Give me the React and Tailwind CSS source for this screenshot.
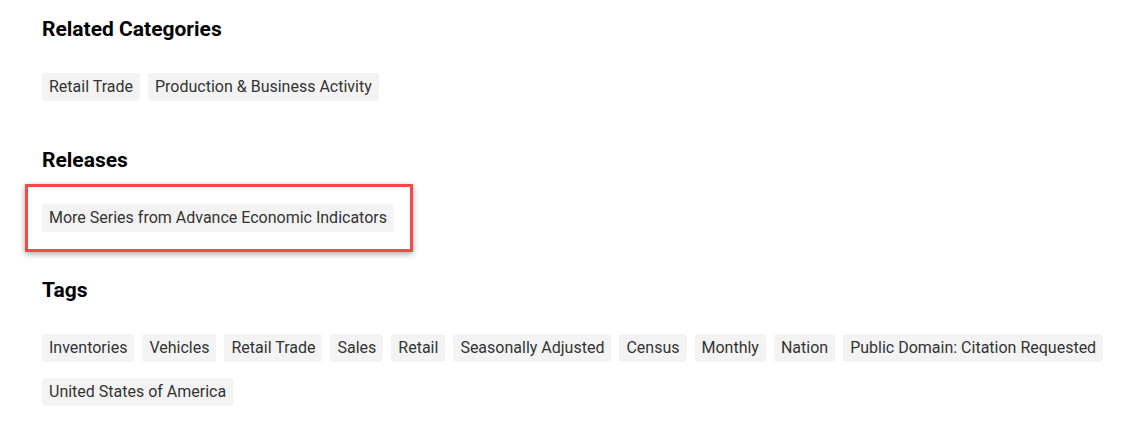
import React from "react";

const Chip = ({ children }) => (
  <span className="inline-flex items-center h-[28px] px-[7px] rounded-[3px] bg-[#f3f3f3] text-[#333333] text-[16px] leading-[28px]">
    {children}
  </span>
);

const Section = ({ title, children, className = "", gap = "mt-[30px]" }) => (
  <section className={className}>
    <h2 className="text-[21px] leading-[28px] font-bold text-black">{title}</h2>
    <div className={`${gap} flex flex-wrap gap-x-[8px] gap-y-[16px]`}>{children}</div>
  </section>
);

export default function App() {
  const tags = [
    "Inventories",
    "Vehicles",
    "Retail Trade",
    "Sales",
    "Retail",
    "Seasonally Adjusted",
    "Census",
    "Monthly",
    "Nation",
    "Public Domain: Citation Requested",
    "United States of America",
  ];
  return (
    <div className="w-[1130px] h-[432px] bg-white pl-[42px] pr-[20px] pt-[15px]" style={{ fontFamily: "Roboto, 'Liberation Sans', sans-serif" }}>
      <Section title="Related Categories">
        <Chip>Retail Trade</Chip>
        <Chip>Production &amp; Business Activity</Chip>
      </Section>
      <Section title="Releases" className="mt-[45px]">
        <div className="relative">
          <Chip>More Series from Advance Economic Indicators</Chip>
          <div className="absolute left-[-17px] top-[-20px] w-[388px] h-[68px] border-[3px] border-[#f04a4a] shadow-[0_2px_6px_rgba(0,0,0,0.35)] pointer-events-none" />
        </div>
      </Section>
      <Section title="Tags" className="mt-[44px]" gap="mt-[30px]">
        {tags.map((t) => (
          <Chip key={t}>{t}</Chip>
        ))}
      </Section>
    </div>
  );
}
